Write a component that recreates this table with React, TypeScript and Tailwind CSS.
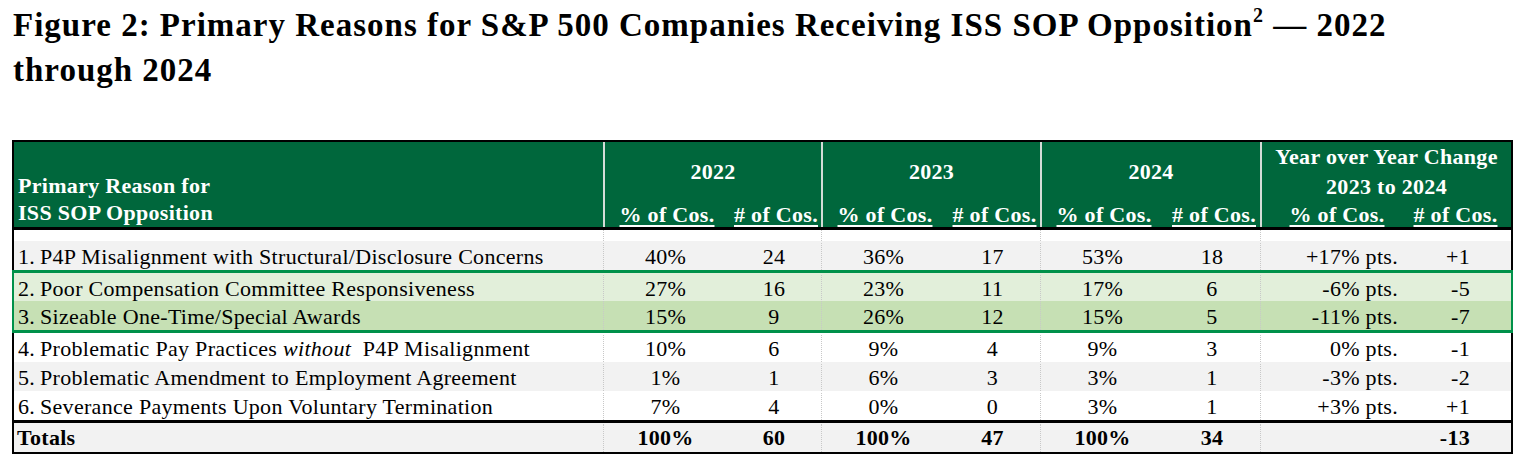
import React from "react";

type Row = {
  n: string;
  label: React.ReactNode;
  v: string[];
  bg: string;
};

const rowsTop: Row[] = [
  {
    n: "1.",
    label: "P4P Misalignment with Structural/Disclosure Concerns",
    v: ["40%", "24", "36%", "17", "53%", "18", "+17% pts.", "+1"],
    bg: "bg-[#f2f2f2]",
  },
];

const rowsGreen: Row[] = [
  {
    n: "2.",
    label: "Poor Compensation Committee Responsiveness",
    v: ["27%", "16", "23%", "11", "17%", "6", "-6% pts.", "-5"],
    bg: "bg-[#e2efda]",
  },
  {
    n: "3.",
    label: "Sizeable One-Time/Special Awards",
    v: ["15%", "9", "26%", "12", "15%", "5", "-11% pts.", "-7"],
    bg: "bg-[#c6e0b4]",
  },
];

const rowsBottom: Row[] = [
  {
    n: "4.",
    label: (
      <>
        Problematic Pay Practices <i>without</i>&nbsp; P4P Misalignment
      </>
    ),
    v: ["10%", "6", "9%", "4", "9%", "3", "0% pts.", "-1"],
    bg: "bg-white",
  },
  {
    n: "5.",
    label: "Problematic Amendment to Employment Agreement",
    v: ["1%", "1", "6%", "3", "3%", "1", "-3% pts.", "-2"],
    bg: "bg-[#f2f2f2]",
  },
  {
    n: "6.",
    label: "Severance Payments Upon Voluntary Termination",
    v: ["7%", "4", "0%", "0", "3%", "1", "+3% pts.", "+1"],
    bg: "bg-white",
  },
];

const gridCols =
  "grid grid-cols-[589px_124px_94px_124px_95px_124px_96px_150px_101px]";

const div = "border-l border-dotted border-[#c8c8c8]";

function DataCells({ v }: { v: string[] }) {
  return (
    <>
      <div className={`${div} text-center`}>{v[0]}</div>
      <div className="text-center">{v[1]}</div>
      <div className={`${div} text-center`}>{v[2]}</div>
      <div className="text-center">{v[3]}</div>
      <div className={`${div} text-center`}>{v[4]}</div>
      <div className="text-center">{v[5]}</div>
      <div className={`${div} text-right pr-[12px]`}>{v[6]}</div>
      <div className="text-right pr-[41px]">{v[7]}</div>
    </>
  );
}

function BodyRow({ r, h = "h-[29px]" }: { r: Row; h?: string }) {
  return (
    <div className={`${gridCols} ${h} ${r.bg} pt-[2px] leading-[27px]`}>
      <div className="pl-[4px] whitespace-nowrap">
        <span className="inline-block w-[22px]">{r.n}</span>
        {r.label}
      </div>
      <DataCells v={r.v} />
    </div>
  );
}

function SubHead({ children, cls = "" }: { children: React.ReactNode; cls?: string }) {
  return (
    <div className={`text-center ${cls}`}>
      <span className="underline decoration-[2px] underline-offset-[3px]">{children}</span>
    </div>
  );
}

function YearGroup({ year, w }: { year: string; w: string }) {
  return (
    <div className="flex flex-col border-l-2 border-[#d4dcd7]">
      <div className="h-[60px] flex items-center justify-center leading-[30px]">{year}</div>
      <div className={`grid ${w} h-[25px] leading-[25px]`}>
        <SubHead>% of Cos.</SubHead>
        <SubHead># of Cos.</SubHead>
      </div>
    </div>
  );
}

export default function App() {
  return (
    <div className="w-[1531px] h-[474px] bg-white font-['Liberation_Serif'] text-black overflow-hidden">
      <div className="pl-[13px] pt-[3px] text-[33px] tracking-[1px] font-bold leading-[45px] whitespace-nowrap">
        Figure 2: Primary Reasons for S&amp;P 500 Companies Receiving ISS SOP Opposition
        <sup className="text-[20px] -top-[0.7em]">2</sup> — 2022
        <br />
        through 2024
      </div>

      <div className="ml-[12px] mt-[47px] w-[1501px] border-2 border-black text-[22px] tracking-[0.3px]">
        {/* Header */}
        <div className="grid grid-cols-[589px_218px_219px_220px_251px] h-[88px] bg-[#00673c] text-white font-bold border-b-[3px] border-black">
          <div className="flex flex-col justify-end pl-[4px] pb-[1px] leading-[27px]">
            <div>Primary Reason for</div>
            <div>ISS SOP Opposition</div>
          </div>
          <YearGroup year="2022" w="grid-cols-[124px_94px]" />
          <YearGroup year="2023" w="grid-cols-[124px_95px]" />
          <YearGroup year="2024" w="grid-cols-[124px_96px]" />
          <div className="flex flex-col border-l-2 border-[#d4dcd7]">
            <div className="h-[60px] flex flex-col items-center justify-center leading-[30px]">
              <div>Year over Year Change</div>
              <div>2023 to 2024</div>
            </div>
            <div className="grid grid-cols-[150px_101px] h-[25px] leading-[25px]">
              <SubHead>% of Cos.</SubHead>
              <SubHead cls="pr-[14px]"># of Cos.</SubHead>
            </div>
          </div>
        </div>

        {/* spacer */}
        <div className={`${gridCols} h-[11px] bg-white`}>
          <div />
          <div className={div} />
          <div />
          <div className={div} />
          <div />
          <div className={div} />
          <div />
          <div className={div} />
          <div />
        </div>

        {rowsTop.map((r, i) => (
          <BodyRow key={i} r={r} />
        ))}

        <div className="-mx-[2px] border-[3px] border-[#00914a]">
          <div className="-mx-[1px]">
            <BodyRow r={rowsGreen[0]} h="h-[28px]" />
            <BodyRow r={rowsGreen[1]} />
          </div>
        </div>

        {rowsBottom.map((r, i) => (
          <BodyRow key={i} r={r} />
        ))}

        {/* Totals */}
        <div
          className={`${gridCols} h-[32px] bg-[#f2f2f2] font-bold border-t-[3px] border-black pt-[1px] leading-[27px]`}
        >
          <div className="pl-[3px]">Totals</div>
          <DataCells v={["100%", "60", "100%", "47", "100%", "34", "", "-13"]} />
        </div>
      </div>
    </div>
  );
}
